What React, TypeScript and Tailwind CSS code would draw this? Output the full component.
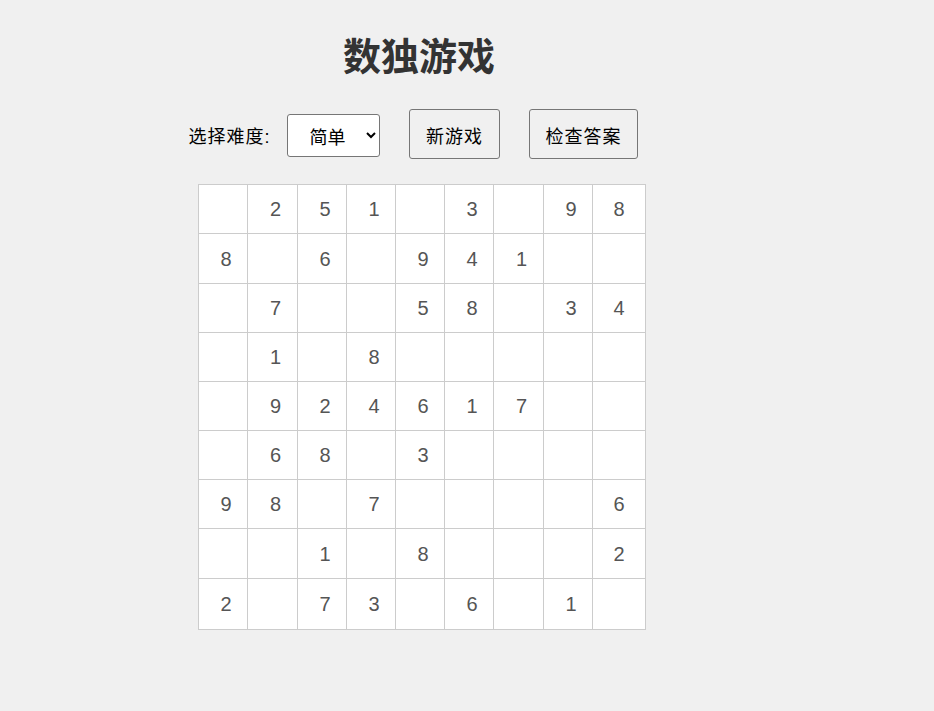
import React from 'react';

const board: number[][] = [
  [0, 2, 5, 1, 0, 3, 0, 9, 8],
  [8, 0, 6, 0, 9, 4, 1, 0, 0],
  [0, 7, 0, 0, 5, 8, 0, 3, 4],
  [0, 1, 0, 8, 0, 0, 0, 0, 0],
  [0, 9, 2, 4, 6, 1, 7, 0, 0],
  [0, 6, 8, 0, 3, 0, 0, 0, 0],
  [9, 8, 0, 7, 0, 0, 0, 0, 6],
  [0, 0, 1, 0, 8, 0, 0, 0, 2],
  [2, 0, 7, 3, 0, 6, 0, 1, 0],
];

const cjk = "font-['Liberation_Sans','Noto_Sans_CJK_SC',sans-serif]";

export default function App() {
  return (
    <div className={`min-h-[711px] w-full bg-[#f0f0f0] ${cjk}`}>
      <div className="w-[838px] flex flex-col items-center pt-[30px]">
        {/* Title */}
        <h1 className="text-[38px] leading-[54px] font-bold text-[#333]">数独游戏</h1>

        {/* Controls */}
        <div className="mt-[25px] mr-[12px] flex items-center text-[18px] text-black">
          <label className="mr-[16px] mt-[6px] tracking-[1px]">选择难度:</label>
          <select className="w-[93px] h-[43px] mt-[2px] pl-[18px] pt-[5px] bg-white border border-[#767676] rounded-[3px] text-[18px]">
            <option>简单</option>
            <option>中等</option>
            <option>困难</option>
          </select>
          <button className="ml-[29px] h-[50px] w-[91px] pl-[1px] pt-[6px] tracking-[1px] border border-[#767676] rounded-[3px] bg-[#f0f0f0]">
            新游戏
          </button>
          <button className="ml-[29px] h-[50px] w-[109px] pl-[1px] pt-[6px] tracking-[1px] border border-[#767676] rounded-[3px] bg-[#f0f0f0]">
            检查答案
          </button>
        </div>

        {/* Board */}
        <div className="mt-[25px] ml-[6px] grid grid-cols-[48px_49px_48px_48px_48px_48px_49px_48px_52px] grid-rows-[48px_49px_48px_48px_48px_48px_48px_49px_50px] gap-px bg-[#ccc] border border-[#ccc]">
          {board.flat().map((n, i) => (
            <div
              key={i}
              className={`bg-white flex items-center justify-center text-[20px] text-[#555] font-['Liberation_Sans',Arial,sans-serif] ${i % 9 === 8 ? 'pl-0' : 'pl-[6px]'}`}
            >
              {n !== 0 ? n : ''}
            </div>
          ))}
        </div>
      </div>
    </div>
  );
}
